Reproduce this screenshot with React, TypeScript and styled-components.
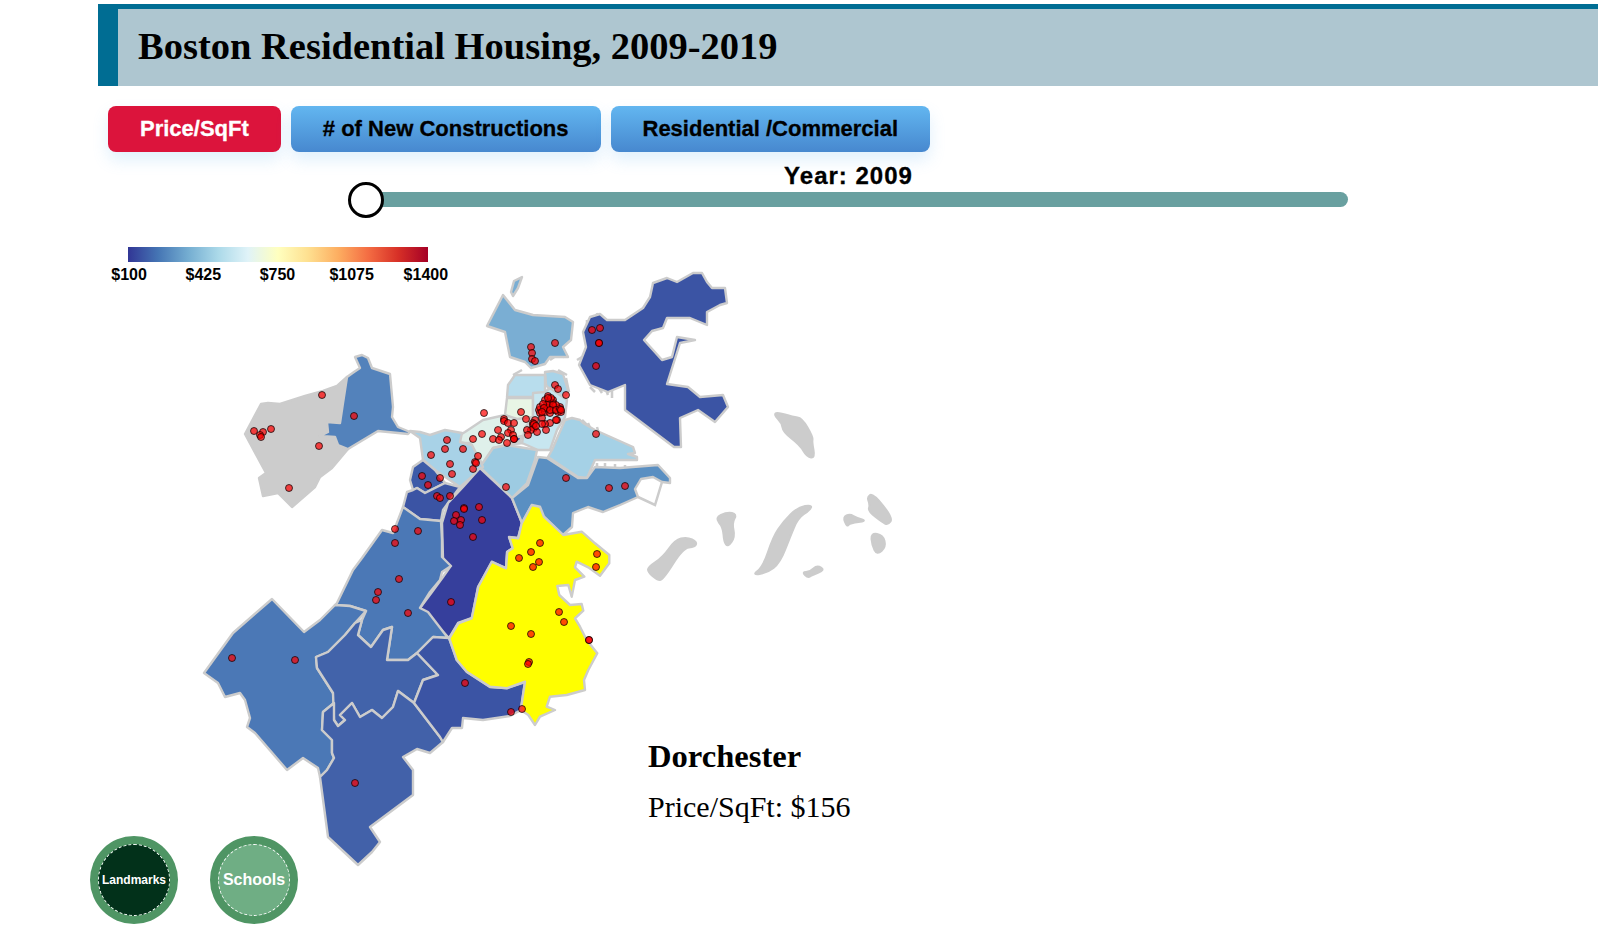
import {FC} from 'react';
import styled, {createGlobalStyle} from 'styled-components';

const neighborhoods: { name: string, fill: string, points: string }[] = [
    {name: 'Allston', fill: '#cccccc', points: '347,377 337,386 323,391 305,396 280,404 268,403 261,404 245,434 266,473 259,478 263,496 278,493 292,507 315,487 320,477 332,468 348,449 338,445 335,437 320,436 328,432 327,422 340,423 343,403'},
    {name: 'Brighton', fill: '#5382bb', points: '347,377 354,372 360,368 355,357 362,355 368,358 372,368 390,374 393,407 392,417 398,427 410,432 408,434 378,431 348,449 338,445 335,437 320,436 328,432 327,422 340,423 343,403'},
    {name: 'Charlestown', fill: '#7aaed3', points: '503,295 487,326 505,332 510,357 525,362 531,368 545,364 550,357 568,357 563,347 571,340 573,322 565,317 533,315 515,310'},
    {name: 'Charlestown sliver', fill: '#7aaed3', points: '511,292 514,281 522,277 518,288 513,296'},
    {name: 'East Boston', fill: '#3b54a4', points: '653,283 667,278 677,282 693,273 702,273 707,282 712,288 725,288 727,303 720,305 707,312 707,325 690,318 667,318 663,328 652,331 644,340 662,360 672,357 677,337 695,340 680,343 667,384 688,387 700,397 723,395 728,407 715,422 698,410 680,418 681,447 674,447 625,410 625,385 608,392 590,385 579,365 586,347 583,332 590,317 600,314 607,320 625,320 643,308 650,297'},
    {name: 'North End', fill: '#a8d3e8', points: '545,372 553,371 563,374 568,390 566,395 556,397 546,385'},
    {name: 'West End', fill: '#b8dded', points: '508,385 515,375 538,375 545,375 545,392 533,397 507,397'},
    {name: 'Beacon Hill', fill: '#e8f5e5', points: '507,398 533,398 533,418 517,420 505,415'},
    {name: 'Back Bay', fill: '#dff0ea', points: '460,435 465,432 483,420 505,415 517,419 533,417 527,428 523,443 507,445 493,448 483,465 470,443 460,443'},
    {name: 'Downtown', fill: '#c7e6f0', points: '533,393 545,392 550,388 567,400 565,417 557,430 550,450 538,450 522,443 525,428 533,417'},
    {name: 'Bay Village', fill: '#3b54a4', points: '512,438 522,436 520,441 510,444'},
    {name: 'Waterfront', fill: '#a5d1e6', points: '572,418 580,420 583,423 595,430 633,447 635,453 628,454 637,457 637,460 595,460 587,478 578,477 548,457 552,450 565,420'},
    {name: 'South End', fill: '#9dcbe2', points: '493,448 507,445 537,450 535,460 527,483 512,498 480,467'},
    {name: 'Fenway', fill: '#a8d2e7', points: '410,431 420,432 430,435 445,430 462,433 460,442 472,445 483,467 460,487 435,470 423,460 420,438'},
    {name: 'Mission Hill', fill: '#3d5ba8', points: '423,460 435,470 445,483 425,493 417,488 413,490 410,480 413,467'},
    {name: 'Jamaica North', fill: '#3b54a4', points: '413,490 417,488 425,493 445,483 460,487 443,510 441,521 420,519 403,507 407,492'},
    {name: 'Roxbury', fill: '#363f9c', points: '480,468 512,498 522,523 518,538 509,537 513,548 507,552 506,568 492,562 478,587 472,618 458,623 449,638 420,608 432,592 443,577 450,567 443,559 442,523 448,503 463,487'},
    {name: 'South Boston', fill: '#5a8fc2', points: '512,498 528,485 538,457 547,458 578,478 587,478 595,467 620,468 658,465 670,478 670,483 662,482 653,477 641,479 635,489 638,497 620,505 603,512 588,507 573,513 572,527 563,535 544,517 532,505 522,523'},
    {name: 'Jamaica Plain', fill: '#4b78b6', points: '403,507 420,519 441,521 442,540 442,557 451,566 442,572 440,580 430,592 420,608 428,612 448,638 433,637 417,653 408,660 387,660 392,627 383,630 371,647 358,635 362,620 366,611 350,606 335,605 337,603 353,570 362,558 382,530 393,533'},
    {name: 'West Roxbury', fill: '#4b78b6', points: '272,599 304,632 320,620 335,605 350,606 366,611 355,623 345,635 328,652 316,657 317,668 333,693 334,703 323,712 322,730 332,740 332,753 334,758 327,770 320,777 318,768 303,758 287,770 255,733 247,727 250,718 245,700 240,693 225,697 218,683 204,673 233,633'},
    {name: 'Roslindale', fill: '#4263aa', points: '362,620 358,635 371,647 383,630 392,627 387,660 408,660 417,653 438,675 423,680 414,703 398,691 393,707 382,718 372,710 360,717 352,703 340,715 345,720 338,726 334,720 333,693 317,668 316,657 328,652 345,635 355,623'},
    {name: 'Hyde Park', fill: '#4261a9', points: '334,703 334,720 338,726 345,720 340,715 352,703 360,717 372,710 382,718 393,707 398,691 414,703 440,737 443,742 430,753 417,749 403,757 413,770 413,795 370,827 380,842 372,852 358,865 328,837 320,777 327,770 334,758 332,753 332,740 322,730 323,712'},
    {name: 'Mattapan', fill: '#3b54a4', points: '417,653 433,637 449,638 457,660 467,672 490,687 507,688 525,682 521,710 510,716 483,720 463,718 462,728 452,728 443,742 440,737 414,703 423,680 438,675'},
    {name: 'Dorchester', fill: '#ffff00', points: '531.7,505 540,506.7 544,516.7 563.3,535 581.7,531.7 595,543.3 609.3,555 609.3,563.3 600,575.7 588.3,567.3 576.7,561.7 575,567.3 584.3,576.7 575,580 571.7,596.7 568.3,585 557.3,586 559.3,595 570,605 581.7,604 583.3,610.7 575,618.3 580,626.7 586.7,640 597.3,653.3 588.3,670 584,680 585,690 566.7,695 550,696.7 546.7,706.7 555,710 540,716.7 535,725 528.3,715 520.7,710 525,681.7 506.7,688.3 490,686.7 466.7,671.7 456.7,660 449.3,638.3 458.3,623.3 471.7,618.3 478.3,586.7 491.7,561.7 506,568.3 507.3,551.7 512.7,548.3 509.3,537.3 518.3,538.3 521.7,523.3'},
]

const islands: string[] = [
    '774,415 777,412 793,417 802,418 813,437 812,442 815,458 807,457 800,445 783,432 782,423',
    '648,567 663,557 675,540 687,537 697,542 695,547 683,548 663,580 657,580 648,572',
    '715,518 727,512 737,514 732,523 735,537 728,547 724,542 723,527',
    '752,575 763,567 773,537 783,522 798,507 812,505 810,510 798,518 790,537 780,563 767,573',
    '802,572 810,572 817,565 825,570 812,575 808,578',
    '843,517 850,514 857,518 867,521 850,523 847,527',
    '867,497 873,493 893,518 888,525 882,522 868,511 870,505',
    '871,533 883,535 886,547 877,555 872,545',
]

// piers and the causeway round Pleasure Bay
const jetties: string[] = [
    'M528 315l5 5M535 317l5 3M560 332l12-4M562 336l9-2M550 360l10-7M563 357l5-2',
    'M513 375l9-5M558 370l9 5M566 378l3 14',
    'M590 387l5 5M597 385l5 8M605 387l3 8M612 388v10M577 360l5-3M587 320v12M597 313l1 5',
    'M582 420l5 5M588 423l3 7M597 427l2 7',
    'M597 463v7M605 463v7M615 464v6M625 465v6',
    'M662 482l-7 23-17-8',
]

const schools: [number, number][] = [
    [322, 395], [254, 431], [263, 432], [260, 435], [261, 437], [271, 429], [319, 446], [289, 488], [354, 416],
    [531, 347], [532, 353], [532, 359], [535, 361], [555, 343], [592, 330], [600, 328], [599, 343], [599, 343], [596, 366],
    [484, 413], [447, 440], [431, 455], [445, 449], [463, 449], [473, 439], [482, 434], [450, 464], [452, 474], [473, 469],
    [475, 462], [476, 463], [478, 456], [422, 476], [440, 478], [428, 485], [437, 496], [440, 498], [450, 496], [506, 487],
    [464, 508], [464, 509], [479, 507], [456, 515], [461, 520], [454, 521], [460, 525], [482, 520], [473, 537],
    [395, 529], [418, 531], [395, 543], [555, 385], [558, 389], [566, 395], [521, 412], [526, 419], [504, 419], [504, 421],
    [508, 423], [514, 423], [498, 430], [511, 430], [508, 433], [501, 437], [493, 439], [499, 440], [513, 435], [514, 439],
    [514, 439], [507, 443], [596, 434], [566, 478], [609, 488], [625, 486],
    [548, 396], [545, 400], [553, 400], [548, 407], [553, 403], [539, 410], [540, 413], [545, 412], [553, 410], [560, 407],
    [558, 412], [561, 412], [550, 413], [542, 418], [557, 420], [550, 423], [545, 424], [542, 424], [535, 420], [533, 423],
    [533, 425], [534, 428], [531, 430], [527, 430], [528, 435], [546, 430], [556, 420], [549, 402], [540, 407], [547, 408],
    [547, 405], [543, 404], [556, 405], [551, 398], [537, 432],
    [548, 398], [553, 405], [544, 408], [550, 410], [542, 412], [556, 410], [560, 409], [534, 424], [561, 410], [536, 426],
    [540, 543], [531, 552], [519, 558], [539, 562], [533, 567], [597, 554], [596, 567], [559, 612], [564, 622], [511, 626],
    [531, 634], [529, 662], [528, 664], [589, 640], [589, 640], [522, 709], [511, 712], [465, 683], [451, 602], [408, 613],
    [232, 658], [295, 660], [355, 783], [399, 579], [378, 592], [376, 600],
]

const legendLabels: string[] = ['$100', '$425', '$750', '$1075', '$1400']

// rounds a polygon off through the midpoints of its sides, the islands have no corners
const smooth = (points: string): string => {
    const pts = points.split(' ').map(p => p.split(',').map(Number))
    const mid = (a: number[], b: number[]) => `${(a[0] + b[0]) / 2} ${(a[1] + b[1]) / 2}`
    const segments = pts.map((p, i) => `Q${p[0]} ${p[1]} ${mid(p, pts[(i + 1) % pts.length])}`)
    return `M${mid(pts[pts.length - 1], pts[0])}${segments.join('')}Z`
}

const GlobalStyle = createGlobalStyle`
  html, body {
    margin: 0;
    padding: 0;
    background: white;
    overflow: hidden;
  }
  * {
    box-sizing: border-box;
  }
`

export const App: FC = () => {
    return (
        <Page>
            <GlobalStyle/>
            <Header>
                <Title>Boston Residential Housing, 2009-2019</Title>
            </Header>
            <Toolbar>
                <TabButton $active>Price/SqFt</TabButton>
                <TabButton>#&nbsp;of New Constructions</TabButton>
                <TabButton>Residential /Commercial</TabButton>
            </Toolbar>
            <YearSlider>
                <YearLabel>Year: 2009</YearLabel>
                <Track>
                    <Thumb/>
                </Track>
            </YearSlider>
            <Stage>
                <MapSvg viewBox="0 247 900 684">
                    {islands.map((points, idx) => <Island key={idx} d={smooth(points)}/>)}
                    <Jetties d={jetties.join('')}/>
                    {neighborhoods.map(({name, fill, points}) => <Region key={name} points={points} fill={fill}/>)}
                    {schools.map(([cx, cy], idx) => <Dot key={idx} cx={cx} cy={cy} r={3.5}/>)}
                </MapSvg>
                <Legend>
                    <LegendBar/>
                    <LegendLabels>
                        {legendLabels.map(label => <LegendLabel key={label}>{label}</LegendLabel>)}
                    </LegendLabels>
                </Legend>
                <Info>
                    <InfoName>Dorchester</InfoName>
                    <InfoValue>Price/SqFt: $156</InfoValue>
                </Info>
                <Toggles>
                    <Toggle>
                        <ToggleFace $dark $small>Landmarks</ToggleFace>
                    </Toggle>
                    <Toggle>
                        <ToggleFace>Schools</ToggleFace>
                    </Toggle>
                </Toggles>
            </Stage>
        </Page>
    );
};

const Page = styled.div`
  width: 1613px;
  height: 931px;
  display: flex;
  flex-direction: column;
  font-family: "Liberation Sans", Arial, sans-serif;
  color: black;
`

const Header = styled.header`
  margin: 4px 15px 0 98px;
  height: 82px;
  background-color: #aec6d0;
  border-top: 5px solid #006d93;
  border-left: 20px solid #006d93;
  display: flex;
  align-items: center;
  padding: 0 0 3px 20px;
`

const Title = styled.h1`
  margin: 0;
  font-family: "Liberation Serif", "Times New Roman", serif;
  font-size: 38.5px;
  font-weight: bold;
  line-height: 1;
`

const Toolbar = styled.div`
  display: flex;
  gap: 10px;
  margin: 20px 0 0 108px;
`

const TabButton = styled.button<{ $active?: boolean }>`
  height: 46px;
  padding: 0 32px;
  border: 0;
  border-radius: 8px;
  font-family: "Liberation Sans", Arial, sans-serif;
  font-size: 22px;
  font-weight: bold;
  -webkit-text-stroke: .3px;
  color: ${({$active}) => $active ? 'white' : 'black'};
  background: ${({$active}) => $active ? '#dc143c' : 'linear-gradient(#62b6f0, #4788cf)'};
  box-shadow: 0 8px 16px rgba(98, 182, 240, .2);
`

const YearSlider = styled.div`
  width: 999px;
  margin: 12px 0 0 349px;
  display: flex;
  flex-direction: column;
  align-items: center;
`

const YearLabel = styled.div`
  font-size: 24px;
  font-weight: bold;
  letter-spacing: 1px;
  -webkit-text-stroke: .3px;
  line-height: 24px;
`

const Track = styled.div`
  position: relative;
  width: 100%;
  height: 15px;
  margin-top: 4px;
  border-radius: 8px;
  background-color: #69a0a0;
`

const Thumb = styled.div`
  position: absolute;
  left: -1px;
  top: -10px;
  width: 36px;
  height: 36px;
  border: 3px solid black;
  border-radius: 50%;
  background-color: white;
`

const Stage = styled.div`
  display: grid;
  margin-top: 40px;
  height: 684px;

  > * {
    grid-area: 1 / 1;
  }
`

const MapSvg = styled.svg`
  width: 900px;
  height: 684px;
  display: block;
`

const Region = styled.polygon`
  stroke: #cccccc;
  stroke-width: 2.4;
  stroke-linejoin: round;
`

const Island = styled.path`
  fill: #cccccc;
  stroke: #cccccc;
  stroke-width: 2;
`

const Jetties = styled.path`
  fill: none;
  stroke: #cccccc;
  stroke-width: 2.5;
`

const Dot = styled.circle`
  fill: rgba(255, 0, 0, .7);
  stroke: rgba(0, 0, 0, .7);
  stroke-width: 1;
`

const Legend = styled.div`
  align-self: start;
  justify-self: start;
  margin-left: 92px;
`

const LegendBar = styled.div`
  width: 300px;
  height: 15px;
  margin-left: 36px;
  background: linear-gradient(to right, #313695, #4575b4, #74add1, #abd9e9, #e0f3f8, #ffffbf, #fee090, #fdae61, #f46d43, #d73027, #a50026);
`

const LegendLabels = styled.div`
  display: grid;
  grid-template-columns: repeat(5, 74.2px);
  margin-top: 4px;
`

const LegendLabel = styled.span`
  text-align: center;
  font-size: 16px;
  font-weight: bold;
  line-height: 17px;
`

const Info = styled.div`
  align-self: start;
  justify-self: start;
  margin: 491px 0 0 648px;
  font-family: "Liberation Serif", "Times New Roman", serif;
`

const InfoName = styled.div`
  font-size: 32.6px;
  font-weight: bold;
  line-height: 36px;
`

const InfoValue = styled.div`
  font-size: 30px;
  line-height: 34px;
  margin-top: 16px;
`

const Toggles = styled.div`
  align-self: end;
  justify-self: start;
  display: flex;
  gap: 32px;
  margin: 0 0 7px 90px;
`

const Toggle = styled.div`
  width: 88px;
  height: 88px;
  padding: 8px;
  border-radius: 50%;
  background-color: #4f9564;
`

const ToggleFace = styled.div<{ $dark?: boolean, $small?: boolean }>`
  width: 100%;
  height: 100%;
  border-radius: 50%;
  border: 1px dashed white;
  display: flex;
  align-items: center;
  justify-content: center;
  color: white;
  font-weight: bold;
  font-size: ${({$small}) => $small ? '12px' : '16px'};
  background-color: ${({$dark}) => $dark ? '#02311a' : '#6fae84'};
`

export default App;
